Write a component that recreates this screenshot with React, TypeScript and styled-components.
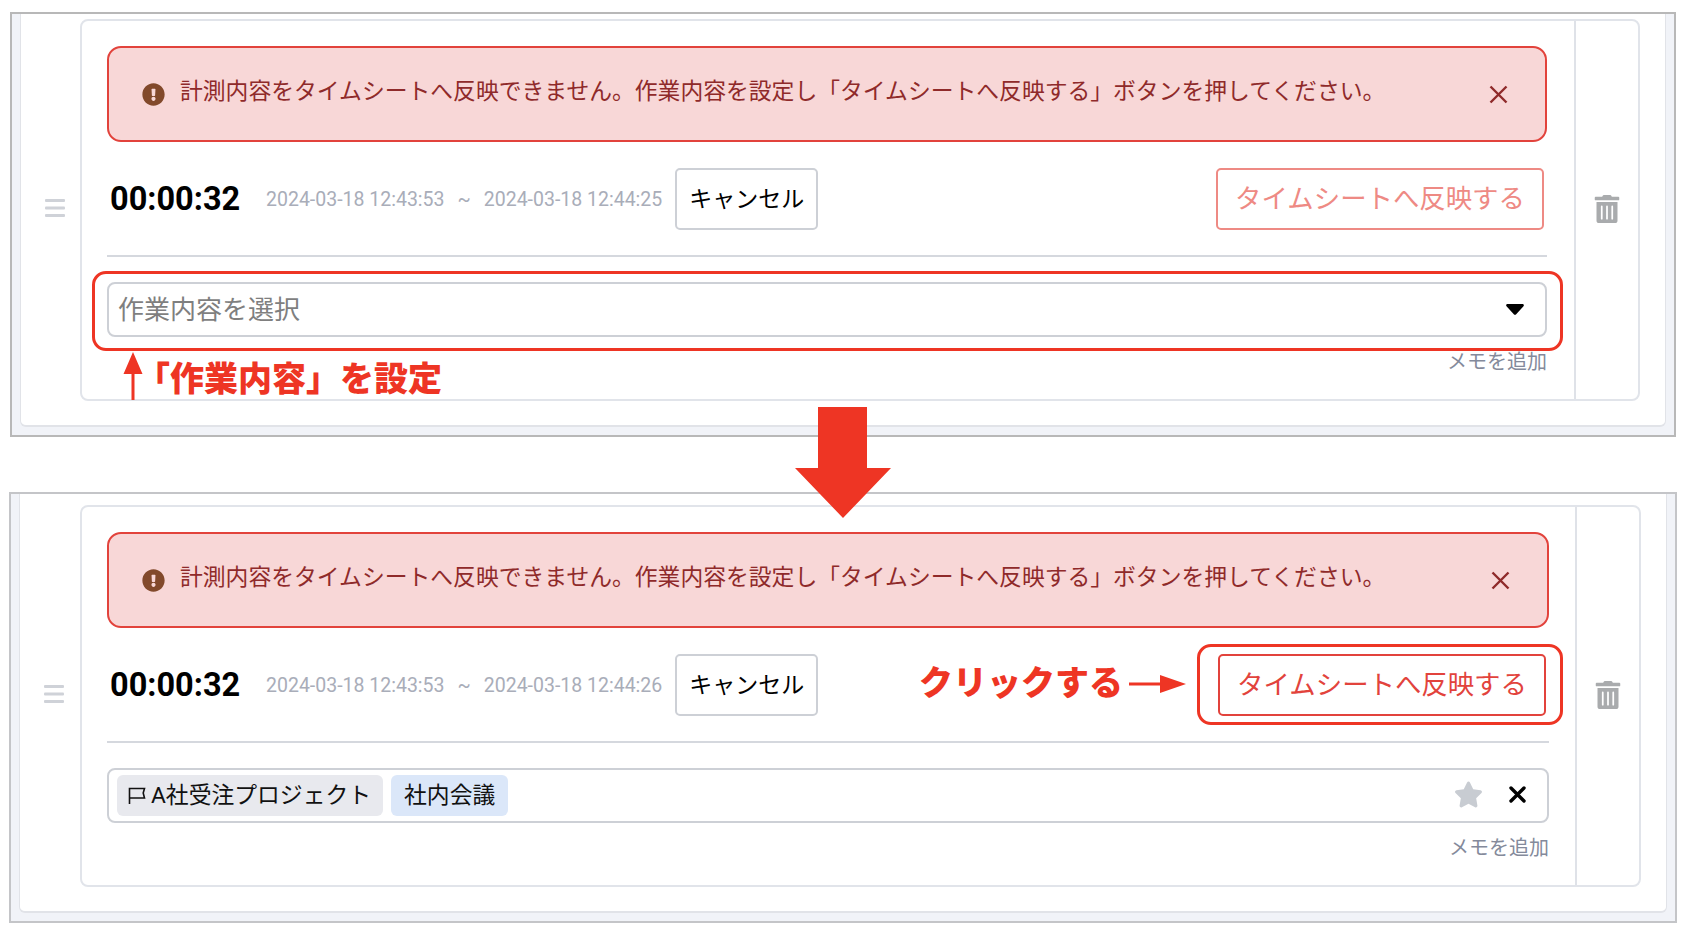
import React from "react";
import styled, { createGlobalStyle } from "styled-components";
import { FaExclamationCircle, FaStar, FaTrashAlt } from "react-icons/fa";

const RED = "#ee3524";
const JP = `Roboto, "Noto Sans CJK JP", sans-serif`;

const GlobalStyle = createGlobalStyle`
  html, body {
    margin: 0;
    background: #fff;
    font-family: ${JP};
  }
  * {
    box-sizing: border-box;
  }
`;

function TaskPanel({
  endTime,
  children,
  active,
  second,
}: {
  endTime: string;
  children: React.ReactNode;
  active?: boolean;
  second?: boolean;
}) {
  return (
    <Frame $second={second}>
      <Sheet>
        <Handle $second={second}>
          <HandleIcon width="20" height="18" viewBox="0 0 20 18">
            <rect y="0" width="20" height="3" rx="1" />
            <rect y="7.5" width="20" height="3" rx="1" />
            <rect y="15" width="20" height="3" rx="1" />
          </HandleIcon>
        </Handle>
        <Card $second={second}>
          <CardMain $second={second}>
            <Alert>
              <AlertIcon>
                <FaExclamationCircle size={23} />
              </AlertIcon>
              <AlertText>
                計測内容をタイムシートへ反映できません。作業内容を設定し「タイムシートへ反映する」ボタンを押してください。
              </AlertText>
              <AlertClose width="19" height="19" viewBox="0 0 19 19">
                <path d="M1.5 1.5 17.5 17.5M17.5 1.5 1.5 17.5" />
              </AlertClose>
            </Alert>
            <TimerRow>
              <Timer>00:00:32</Timer>
              <Dates>
                <span>2024-03-18 12:43:53</span>
                <Tilde>~</Tilde>
                <span>{endTime}</span>
              </Dates>
              <CancelButton>キャンセル</CancelButton>
              <ApplyButton $active={active}>タイムシートへ反映する</ApplyButton>
            </TimerRow>
            <Divider />
            {children}
            <MemoLink>メモを追加</MemoLink>
          </CardMain>
          <Rail>
            <FaTrashAlt size={28} color="#a9abad" />
          </Rail>
        </Card>
      </Sheet>
    </Frame>
  );
}

export default function App() {
  return (
    <Page>
      <GlobalStyle />
      <TaskPanel endTime="2024-03-18 12:44:25">
        <SelectBox>
          <Placeholder>作業内容を選択</Placeholder>
          <svg width="18" height="11" viewBox="0 0 18 11">
            <path d="M1.5 0h15c1.2 0 1.8 1.3 1 2.2l-7.3 8c-.6.7-1.8.7-2.4 0l-7.3-8C-.3 1.3.3 0 1.500 0z" fill="#000" />
          </svg>
        </SelectBox>
      </TaskPanel>

      <SecondSlot>
        <TaskPanel endTime="2024-03-18 12:44:26" active second>
          <SelectBox>
            <ProjectChip>
              <svg width="18" height="17" viewBox="0 0 18 17">
                <path d="M1.500 17V1.500H16.500L15.200 6 16.500 11H1.500" fill="none" stroke="#111" strokeWidth="1.600" />
              </svg>
              A社受注プロジェクト
            </ProjectChip>
            <TaskChip>社内会議</TaskChip>
            <SelectActions>
              <FaStar size={29} color="#c8ccd2" />
              <svg width="17" height="17" viewBox="0 0 17 17">
                <path d="M2 2 15 15M15 2 2 15" stroke="#000" strokeWidth="3.400" strokeLinecap="round" />
              </svg>
            </SelectActions>
          </SelectBox>
        </TaskPanel>
      </SecondSlot>

      <SelectHighlight />
      <UpArrow width="20" height="48" viewBox="0 0 20 48">
        <path d="M10 0 19.500 22H11.500V48H8.500V22H.5z" fill={RED} />
      </UpArrow>
      <SelectNote>「作業内容」を設定</SelectNote>

      <DownArrow width="96" height="111" viewBox="0 0 96 111">
        <path d="M23 0H72V61H96L48 111 0 61H23z" fill={RED} />
      </DownArrow>

      <ButtonHighlight />
      <ClickNote>クリックする</ClickNote>
      <RightArrow width="57" height="18" viewBox="0 0 57 18">
        <path d="M0 7.500H31V0L57 9 31 18V10.500H0z" fill={RED} />
      </RightArrow>
    </Page>
  );
}

const Page = styled.div`
  position: relative;
  width: 1684px;
  height: 938px;
  padding-top: 12px;
  overflow: hidden;
`;

const SecondSlot = styled.div`
  margin-top: 55px;
`;

const Frame = styled.section<{ $second?: boolean }>`
  width: ${({ $second }) => ($second ? "1668px" : "1666px")};
  margin-left: ${({ $second }) => ($second ? "9px" : "10px")};
  padding: 0 8px 8px;
  border: 2px solid ${({ $second }) => ($second ? "#c4c5c8" : "#b8b8b8")};
  background: #f1f3f8;
`;

const Sheet = styled.div`
  display: flex;
  padding-bottom: 24px;
  background: #fff;
  border: solid #e1e3e8;
  border-width: 0 1px 2px 1px;
  border-radius: 0 0 6px 6px;
`;

const Handle = styled.div<{ $second?: boolean }>`
  flex: 0 0 ${({ $second }) => ($second ? "60px" : "59px")};
  display: flex;
  align-items: center;
  margin-top: ${({ $second }) => ($second ? "11px" : "5px")};
  padding: 0 0 4px 24px;
`;

const HandleIcon = styled.svg`
  fill: #cfd2d8;
`;

const Card = styled.div<{ $second?: boolean }>`
  flex: 1;
  display: flex;
  height: 382px;
  margin-top: ${({ $second }) => ($second ? "11px" : "5px")};
  margin-right: 25px;
  border: 2px solid #e1e4ea;
  border-radius: 8px;
`;

const CardMain = styled.div<{ $second?: boolean }>`
  flex: 1;
  min-width: 0;
  padding: 25px ${({ $second }) => ($second ? "26px" : "27px")} 0 25px;
`;

const Rail = styled.div`
  flex: 0 0 64px;
  display: flex;
  align-items: center;
  justify-content: center;
  padding-bottom: 3px;
  border-left: 2px solid #dfe2e8;
`;

const Alert = styled.div`
  display: flex;
  align-items: center;
  height: 96px;
  padding: 0 37px 0 33px;
  background: #f8d7d7;
  border: 2px solid #e2433c;
  border-radius: 14px;
  color: #8f2a2a;
`;

const AlertIcon = styled.span`
  display: flex;
  margin-right: 15px;
  color: #82492b;
`;

const AlertText = styled.span`
  flex: 1;
  margin-bottom: 5px;
  font-size: 22.800px;
  line-height: 30px;
  white-space: nowrap;
`;

const AlertClose = styled.svg`
  stroke: #8f2a2a;
  stroke-width: 2.400;
`;

const TimerRow = styled.div`
  display: flex;
  align-items: center;
  height: 62px;
  margin-top: 26px;
  padding-left: 3px;
`;

const Timer = styled.span`
  width: 128px;
  font-size: 32.500px;
  font-weight: 700;
  color: #000;
  white-space: nowrap;
`;

const Dates = styled.span`
  display: flex;
  align-items: center;
  margin-left: 28px;
  font-size: 19.500px;
  color: #a9adb9;
  white-space: nowrap;
`;

const Tilde = styled.span`
  margin: 0 13px;
`;

const BaseButton = styled.button`
  height: 62px;
  padding: 0 0 5px;
  background: #fff;
  border-radius: 5px;
  font-family: ${JP};
  white-space: nowrap;
`;

const CancelButton = styled(BaseButton)`
  width: 143px;
  margin-left: 13px;
  border: 2px solid #cdd0d6;
  font-size: 23px;
  color: #000;
`;

const ApplyButton = styled(BaseButton)<{ $active?: boolean }>`
  width: 328px;
  margin-left: auto;
  margin-right: 3px;
  border: 2px solid ${({ $active }) => ($active ? "#e2433c" : "#ee8a84")};
  font-size: 26.400px;
  color: ${({ $active }) => ($active ? "#e2433c" : "#ee8a84")};
`;

const Divider = styled.hr`
  height: 2px;
  margin: 25px 0 25px;
  border: 0;
  background: #d5d8de;
`;

const SelectBox = styled.div`
  display: flex;
  align-items: center;
  gap: 7px;
  height: 55px;
  padding: 0 21px 0 8px;
  border: 2px solid #cdd0d6;
  border-radius: 8px;
  justify-content: flex-start;

  & > svg {
    margin-left: auto;
  }
`;

const Placeholder = styled.span`
  padding: 0 0 4px 1px;
  font-size: 26px;
  color: #7f7f7f;
`;

const ProjectChip = styled.span`
  display: flex;
  align-items: center;
  gap: 5px;
  height: 41px;
  padding: 0 12px 5px 11px;
  background: #e8e9ee;
  border-radius: 6px;
  font-size: 22.800px;
  color: #111;
  white-space: nowrap;

  & > svg {
    margin-top: 5px;
  }
`;

const TaskChip = styled.span`
  display: flex;
  align-items: center;
  height: 41px;
  margin-left: 1px;
  padding: 0 13px 5px;
  background: #dbe7f9;
  border-radius: 6px;
  font-size: 22.800px;
  color: #111;
  white-space: nowrap;
`;

const SelectActions = styled.span`
  display: flex;
  align-items: center;
  gap: 26px;
  margin-left: auto;
  padding-bottom: 2px;
`;

const MemoLink = styled.div`
  margin-top: 15px;
  font-size: 20px;
  line-height: 20px;
  text-align: right;
  color: #848a9b;
`;

/* annotations drawn on top of the screenshot */
const SelectHighlight = styled.div`
  position: absolute;
  left: 92px;
  top: 271px;
  width: 1471px;
  height: 80px;
  border: 3.500px solid ${RED};
  border-radius: 14px;
`;

const ButtonHighlight = styled.div`
  position: absolute;
  left: 1197px;
  top: 644px;
  width: 366px;
  height: 81px;
  border: 3.500px solid ${RED};
  border-radius: 14px;
`;

const UpArrow = styled.svg`
  position: absolute;
  left: 123px;
  top: 352px;
`;

const DownArrow = styled.svg`
  position: absolute;
  left: 795px;
  top: 407px;
`;

const RightArrow = styled.svg`
  position: absolute;
  left: 1129px;
  top: 675px;
`;

const Note = styled.span`
  position: absolute;
  font-size: 34px;
  line-height: 40px;
  font-weight: 900;
  color: ${RED};
  white-space: nowrap;
`;

const SelectNote = styled(Note)`
  left: 136px;
  top: 359px;
`;

const ClickNote = styled(Note)`
  left: 919px;
  top: 663px;
`;
